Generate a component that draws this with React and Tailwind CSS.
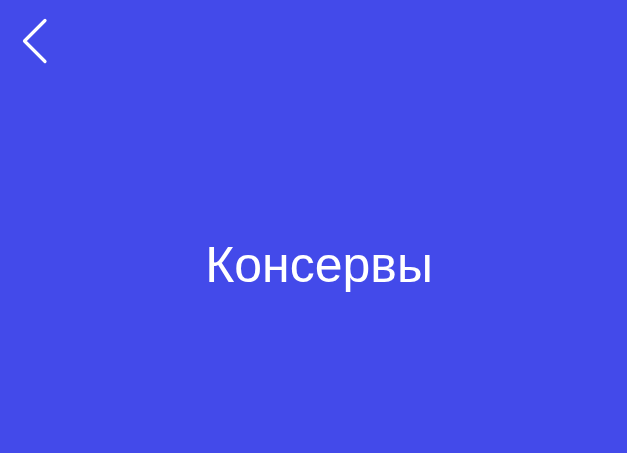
export default function App() {
  return (
    <div className="w-[627px] h-[453px] bg-[#434aea] flex flex-col font-[Liberation_Sans,Arial,sans-serif] text-white overflow-hidden">
      <header className="h-[76px] shrink-0 flex items-start pl-[20px] pt-[17px]">
        <button className="w-[30px] h-[48px] flex items-center justify-center">
          <svg width="30" height="48" viewBox="0 0 30 48" fill="none">
            <path d="M25 3.5 L4.5 24 L25 44.5" stroke="white" strokeWidth="3.2" strokeLinecap="round" strokeLinejoin="round" />
          </svg>
        </button>
      </header>
      <main className="flex-1 flex items-center justify-center pl-[11px]">
        <h1 className="text-[50px] leading-none font-normal">Консервы</h1>
      </main>
    </div>
  );
}
